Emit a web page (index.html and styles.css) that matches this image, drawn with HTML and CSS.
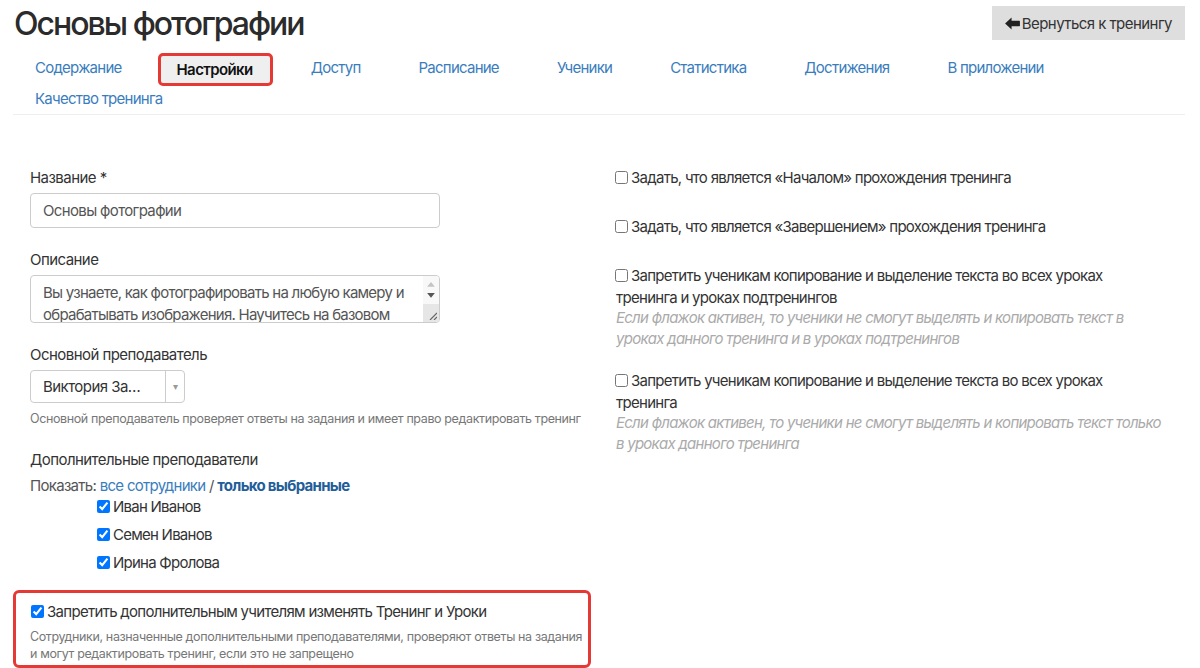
FILE: index.html
```html
<!DOCTYPE html>
<html lang="ru">
<head>
<meta charset="utf-8">
<title>Основы фотографии</title>
<link rel="stylesheet" href="styles.css">
</head>
<body>
<div class="page">
  <header class="header">
    <h1 class="title">Основы фотографии</h1>
    <a class="back-btn" href="#"><svg class="back-icon" viewBox="0 0 16 14" width="15" height="13"><path d="M0 7 L7 0.5 L7 4 L15.5 4 Q16 4 16 4.5 L16 9.5 Q16 10 15.5 10 L7 10 L7 13.5 Z" fill="#222"/></svg>Вернуться к тренингу</a>
  </header>

  <nav class="tabs">
    <a class="tab" href="#">Содержание</a>
    <a class="tab tab-active" href="#">Настройки</a>
    <a class="tab" href="#">Доступ</a>
    <a class="tab" href="#">Расписание</a>
    <a class="tab" href="#">Ученики</a>
    <a class="tab" href="#">Статистика</a>
    <a class="tab" href="#">Достижения</a>
    <a class="tab" href="#">В приложении</a>
    <a class="tab" href="#">Качество тренинга</a>
  </nav>

  <main class="content">
    <section class="col-left">
      <div class="group">
        <div class="label">Название *</div>
        <div class="input">Основы фотографии</div>
      </div>
      <div class="group">
        <div class="label">Описание</div>
        <div class="textarea">
          <div class="textarea-text">Вы узнаете, как фотографировать на любую камеру и обрабатывать изображения. Научитесь на базовом</div>
          <div class="scrollbar">
            <svg class="sb-arrow" viewBox="0 0 8 5" width="8" height="5"><path d="M0 5 L4 0 L8 5 Z" fill="#c4c4c4"/></svg>
            <svg class="sb-arrow" viewBox="0 0 8 5" width="8" height="5"><path d="M0 0 L8 0 L4 5 Z" fill="#555"/></svg>
            <div class="sb-corner"><svg viewBox="0 0 8 8" width="8" height="8"><path d="M1 8 L8 1 M5 8 L8 5" stroke="#666" stroke-width="1.2"/></svg></div>
          </div>
        </div>
      </div>
      <div class="group group-main">
        <div class="label">Основной преподаватель</div>
        <div class="select"><span class="select-text">Виктория За…</span><span class="select-arrow">▾</span></div>
        <div class="help">Основной преподаватель проверяет ответы на задания и имеет право редактировать тренинг</div>
      </div>
      <div class="group group-extra">
        <div class="label">Дополнительные преподаватели</div>
        <div class="show-line">Показать: <a class="link" href="#">все сотрудники</a> / <a class="link link-strong" href="#">только выбранные</a></div>
        <ul class="teachers">
          <li class="teacher"><input type="checkbox" checked><span>Иван Иванов</span></li>
          <li class="teacher"><input type="checkbox" checked><span>Семен Иванов</span></li>
          <li class="teacher"><input type="checkbox" checked><span>Ирина Фролова</span></li>
        </ul>
      </div>
      <div class="highlight">
        <label class="check-line"><input type="checkbox" checked><span>Запретить дополнительным учителям изменять Тренинг и Уроки</span></label>
        <div class="help">Сотрудники, назначенные дополнительными преподавателями, проверяют ответы на задания и могут редактировать тренинг, если это не запрещено</div>
      </div>
    </section>

    <section class="col-right">
      <div class="opt">
        <label class="check-line"><input type="checkbox"><span>Задать, что является «Началом» прохождения тренинга</span></label>
      </div>
      <div class="opt">
        <label class="check-line"><input type="checkbox"><span>Задать, что является «Завершением» прохождения тренинга</span></label>
      </div>
      <div class="opt opt-help">
        <label class="check-line"><input type="checkbox"><span>Запретить ученикам копирование и выделение текста во всех уроках тренинга и уроках подтренингов</span></label>
        <div class="note">Если флажок активен, то ученики не смогут выделять и копировать текст в уроках данного тренинга и в уроках подтренингов</div>
      </div>
      <div class="opt opt-help">
        <label class="check-line"><input type="checkbox"><span>Запретить ученикам копирование и выделение текста во всех уроках тренинга</span></label>
        <div class="note">Если флажок активен, то ученики не смогут выделять и копировать текст только в уроках данного тренинга</div>
      </div>
    </section>
  </main>
</div>
</body>
</html>
```

FILE: styles.css
```css
* { box-sizing: border-box; }

html, body {
  margin: 0;
  background: #fff;
}

body {
  font-family: Inter, "Noto Sans", sans-serif;
  font-size: 15px;
  color: #333;
  letter-spacing: -0.55px;
}

.page {
  padding: 0 15px 0 13px;
}

.header {
  display: flex;
  justify-content: space-between;
  align-items: flex-start;
  height: 52px;
}

.title {
  margin: 4px 0 0 1px;
  font-size: 32px;
  font-weight: 500;
  line-height: 40px;
  letter-spacing: -2px;
  color: #2b2b2b;
}

.back-btn {
  display: flex;
  align-items: center;
  gap: 2px;
  margin-top: 6px;
  height: 34px;
  padding: 0 13px 0 13px;
  background: #dedede;
  color: #333;
  text-decoration: none;
  font-size: 15px;
  letter-spacing: -0.55px;
}

.back-icon {
  display: block;
}

.tabs {
  display: flex;
  flex-wrap: wrap;
  column-gap: 16px;
  border-bottom: 1px solid #eee;
}

.tab {
  display: block;
  height: 31px;
  line-height: 31px;
  padding: 0 20px 0 22px;
  color: #3a7dbd;
  text-decoration: none;
  font-size: 15px;
  letter-spacing: -0.75px;
}

.tab-active {
  height: 33px;
  line-height: 27px;
  margin: 1px 0 -3px;
  border: 3px solid #e53935;
  border-radius: 5px;
  background: #efefef;
  color: #111;
  font-weight: 600;
  padding: 0 17px 0 16px;
  letter-spacing: -0.6px;
}

.content {
  display: grid;
  grid-template-columns: 578px 1fr;
  column-gap: 25px;
  padding-top: 52px;
}

.group {
  padding-left: 17px;
  margin-bottom: 21px;
}

.group-main {
  margin-bottom: 22px;
}

.group-extra {
  margin-bottom: 0;
}

.label {
  line-height: 22px;
  margin-bottom: 4px;
}

.input {
  width: 410px;
  height: 35px;
  border: 1px solid #ccc;
  border-radius: 4px;
  padding: 0 12px;
  line-height: 33px;
  color: #555;
  letter-spacing: -0.65px;
}

.textarea {
  display: flex;
  width: 410px;
  height: 48px;
  border: 1px solid #ccc;
  border-radius: 4px;
  overflow: hidden;
}

.textarea-text {
  flex: 1;
  padding: 6px 12px 0;
  line-height: 22px;
  color: #555;
  letter-spacing: -0.75px;
  overflow: hidden;
}

.scrollbar {
  width: 16px;
  flex: none;
  display: flex;
  flex-direction: column;
  align-items: center;
  background: #f8f8f8;
  padding-top: 6px;
  gap: 6px;
}

.sb-arrow {
  display: block;
}

.sb-corner {
  margin-top: auto;
  align-self: stretch;
  height: 19px;
  background: #e6e6e6;
  display: flex;
  align-items: flex-end;
  justify-content: flex-end;
  padding: 0 2px 2px 0;
}

.sb-corner svg {
  display: block;
}

.select {
  display: flex;
  width: 155px;
  height: 33px;
  border: 1px solid #ccc;
  border-radius: 4px;
  margin-top: 1px;
}

.select-text {
  flex: 1;
  padding-left: 12px;
  line-height: 31px;
  color: #333;
}

.select-arrow {
  width: 19px;
  border-left: 1px solid #ccc;
  text-align: center;
  line-height: 30px;
  font-size: 10px;
  color: #999;
}

.help {
  margin-top: 7px;
  font-size: 12.5px;
  line-height: 17px;
  letter-spacing: -0.38px;
  color: #777;
}

.show-line {
  line-height: 22px;
  color: #555;
  letter-spacing: -0.7px;
}

.link {
  color: #3a7dbd;
  text-decoration: none;
}

.link-strong {
  color: #1f5e99;
  font-weight: 700;
}

.teachers {
  list-style: none;
  margin: -2px 0 0;
  padding: 0 0 0 66px;
  display: flex;
  flex-direction: column;
  gap: 6px;
  letter-spacing: -0.75px;
}

.teacher {
  display: flex;
  align-items: center;
  height: 22px;
}

.teacher input,
.check-line input {
  width: 13px;
  height: 13px;
  margin: 0 3px 0 1px;
  flex: none;
}

.highlight {
  margin-top: 17px;
  border: 3px solid #e53935;
  border-radius: 6px;
  padding: 8px 4px 3px 14px;
}

.highlight .check-line {
  display: block;
  line-height: 22px;
  letter-spacing: -0.7px;
}

.highlight .help {
  margin-top: 5px;
}

.col-right .check-line {
  display: block;
  line-height: 22px;
  letter-spacing: -0.72px;
}

.col-right .check-line input {
  margin-left: -1px;
}

.check-line input {
  vertical-align: -1px;
}

.opt {
  margin-bottom: 27px;
  padding-right: 20px;
}

.opt-help {
  margin-bottom: 21px;
}

.note {
  margin-top: -2px;
  font-style: italic;
  font-size: 15px;
  line-height: 21px;
  letter-spacing: -0.74px;
  color: #aaa;
}
```
